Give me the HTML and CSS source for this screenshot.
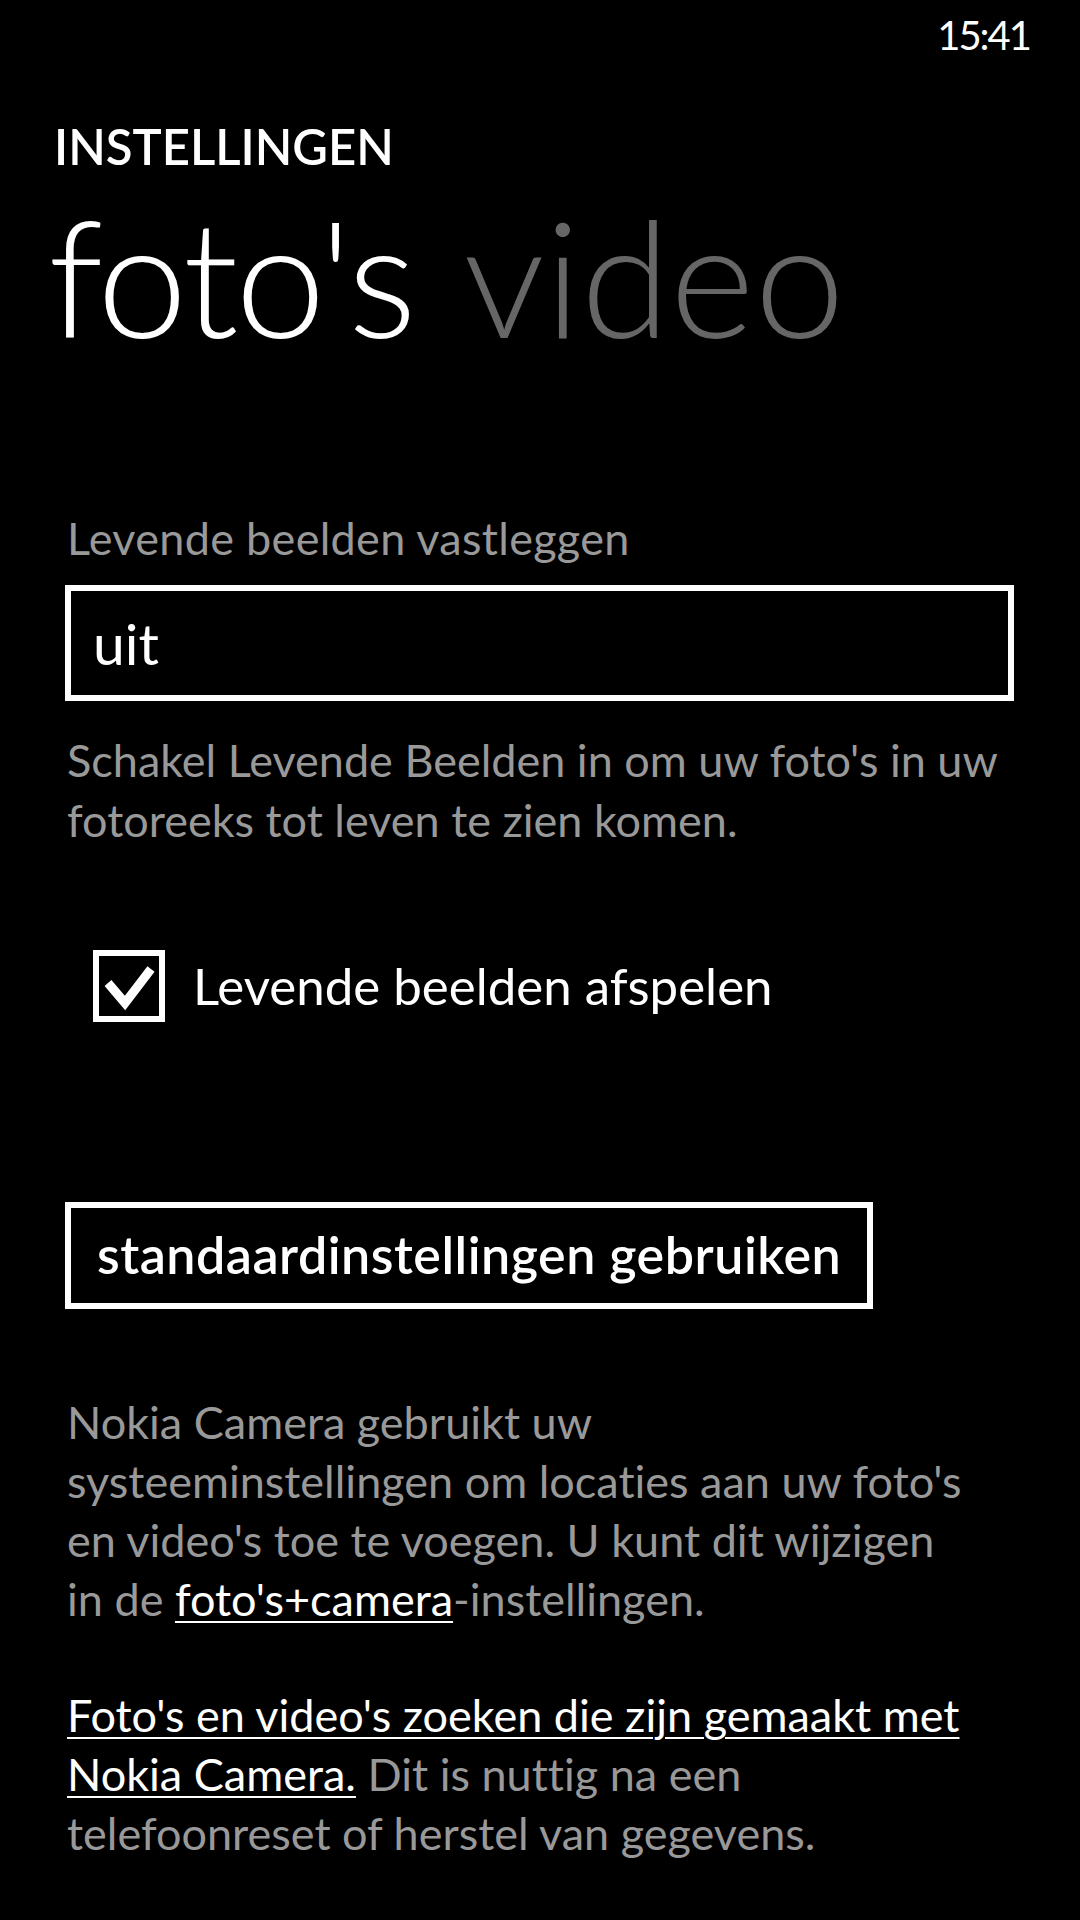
FILE: index.html
```html
<!DOCTYPE html>
<html lang="nl">
<head>
<meta charset="utf-8">
<title>instellingen</title>
<link rel="stylesheet" href="styles.css">
</head>
<body>
<div class="screen">
  <div class="status"><span class="time">15:41</span></div>
  <div class="app-title">INSTELLINGEN</div>
  <div class="pivot">
    <span class="pivot-item active">foto's</span>
    <span class="pivot-item">video</span>
  </div>
  <div class="content">
    <div class="field-label">Levende beelden vastleggen</div>
    <div class="picker"><span class="picker-value">uit</span></div>
    <p class="desc">Schakel Levende Beelden in om uw foto's in uw<br>fotoreeks tot leven te zien komen.</p>
    <div class="check-row">
      <svg class="checkbox" width="72" height="72" viewBox="0 0 72 72">
        <rect x="3" y="3" width="66" height="66" fill="none" stroke="#fff" stroke-width="6"/>
        <polyline points="15,33 32,53 58,19" fill="none" stroke="#fff" stroke-width="9" stroke-linejoin="miter" stroke-linecap="butt"/>
      </svg>
      <span class="check-label">Levende beelden afspelen</span>
    </div>
    <div class="button-row"><span class="button">standaardinstellingen gebruiken</span></div>
    <p class="para first">Nokia Camera gebruikt uw<br>systeeminstellingen om locaties aan uw foto's<br>en video's toe te voegen. U kunt dit wijzigen<br>in de <a class="link">foto's+camera</a>-instellingen.</p>
    <p class="para second"><a class="link">Foto's en video's zoeken die zijn gemaakt met<br>Nokia Camera.</a> Dit is nuttig na een<br>telefoonreset of herstel van gegevens.</p>
  </div>
</div>
</body>
</html>
```
FILE: styles.css
```css
html, body {
  margin: 0;
  padding: 0;
  background: #000;
}
body {
  width: 1080px;
  height: 1920px;
  overflow: hidden;
  font-family: "Lato", "Open Sans", sans-serif;
  font-variant-ligatures: none;
  color: #fff;
}
.screen {
  display: flex;
  flex-direction: column;
}
.status {
  height: 70px;
  box-sizing: border-box;
  padding: 15px 50px 0 0;
  display: flex;
  justify-content: flex-end;
}
.time {
  font-size: 40px;
  line-height: 40px;
  font-weight: 400;
  letter-spacing: -2px;
}
.app-title {
  margin-top: 46px;
  padding-left: 54px;
  font-size: 49px;
  line-height: 60px;
  font-weight: 600;
}
.pivot {
  margin-top: 15px;
  padding-left: 48px;
  display: flex;
  gap: 50px;
  font-size: 162px;
  line-height: 170px;
  font-weight: 300;
}
.pivot-item {
  color: #666;
}
.pivot-item.active {
  color: #fff;
  letter-spacing: -3px;
}
.content {
  padding-left: 65px;
  width: 949px;
  display: flex;
  flex-direction: column;
  align-items: flex-start;
}
.field-label {
  margin-top: 152px;
  font-size: 45px;
  line-height: 50px;
  letter-spacing: 0.3px;
  color: #999;
  padding-left: 2px;
}
.picker {
  margin-top: 22px;
  width: 949px;
  height: 116px;
  box-sizing: border-box;
  border: 6px solid #fff;
  padding-left: 22px;
  font-size: 57px;
  line-height: 104px;
}
.desc {
  margin: 29px 0 0 0;
  padding-left: 2px;
  font-size: 45px;
  line-height: 60px;
  color: #999;
  white-space: nowrap;
}
.check-row {
  margin-top: 100px;
  padding-left: 28px;
  display: flex;
  align-items: center;
  gap: 28px;
}
.checkbox {
  display: block;
}
.check-label {
  font-size: 51px;
  line-height: 72px;
}
.button-row {
  margin-top: 180px;
  display: flex;
}
.button {
  display: block;
  height: 107px;
  box-sizing: border-box;
  border: 6px solid #fff;
  padding: 0 26px;
  font-size: 52px;
  line-height: 92px;
  font-weight: 600;
  letter-spacing: 0.5px;
  white-space: nowrap;
}
.para {
  margin: 0;
  padding-left: 2px;
  font-size: 45px;
  line-height: 59px;
  color: #999;
  white-space: nowrap;
}
.para.first {
  margin-top: 84px;
}
.para.second {
  margin-top: 57px;
}
.link {
  color: #fff;
  text-decoration: underline;
  text-decoration-thickness: 2px;
  text-underline-offset: 5px;
}
```
